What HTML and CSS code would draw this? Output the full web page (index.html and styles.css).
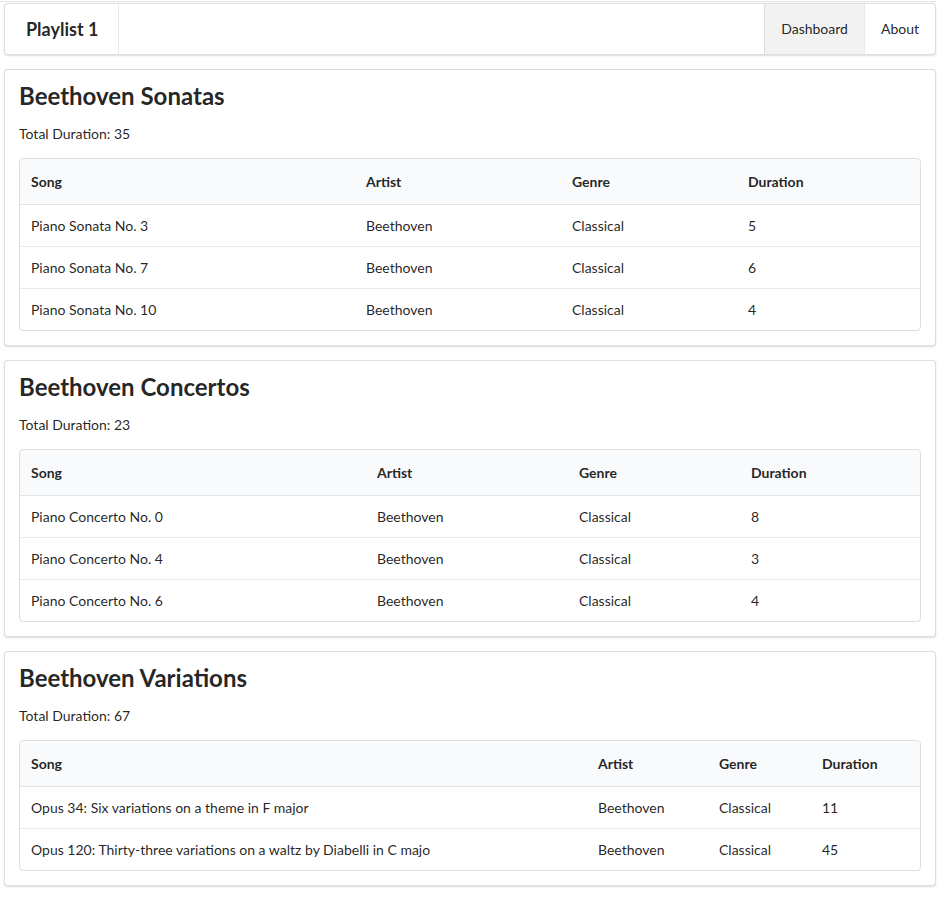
FILE: index.html
```html
<!DOCTYPE html>
<html>
<head>
<meta charset="utf-8">
<link rel="stylesheet" href="styles.css">
</head>
<body>
<div class="topline"></div>
<div class="page">
  <nav class="menu">
    <div class="brand">Playlist 1</div>
    <div class="menu-right">
      <a class="item active">Dashboard</a>
      <a class="item">About</a>
    </div>
  </nav>

  <section class="segment">
    <h2 class="title">Beethoven Sonatas</h2>
    <p class="total">Total Duration: 35</p>
    <table class="songs sonatas">
      <colgroup><col class="c1"><col class="c2"><col class="c3"><col class="c4"></colgroup>
      <thead><tr><th>Song</th><th>Artist</th><th>Genre</th><th>Duration</th></tr></thead>
      <tbody>
        <tr><td>Piano Sonata No. 3</td><td>Beethoven</td><td>Classical</td><td>5</td></tr>
        <tr><td>Piano Sonata No. 7</td><td>Beethoven</td><td>Classical</td><td>6</td></tr>
        <tr><td>Piano Sonata No. 10</td><td>Beethoven</td><td>Classical</td><td>4</td></tr>
      </tbody>
    </table>
  </section>

  <section class="segment">
    <h2 class="title">Beethoven Concertos</h2>
    <p class="total">Total Duration: 23</p>
    <table class="songs concertos">
      <colgroup><col class="c1"><col class="c2"><col class="c3"><col class="c4"></colgroup>
      <thead><tr><th>Song</th><th>Artist</th><th>Genre</th><th>Duration</th></tr></thead>
      <tbody>
        <tr><td>Piano Concerto No. 0</td><td>Beethoven</td><td>Classical</td><td>8</td></tr>
        <tr><td>Piano Concerto No. 4</td><td>Beethoven</td><td>Classical</td><td>3</td></tr>
        <tr><td>Piano Concerto No. 6</td><td>Beethoven</td><td>Classical</td><td>4</td></tr>
      </tbody>
    </table>
  </section>

  <section class="segment">
    <h2 class="title">Beethoven Variations</h2>
    <p class="total">Total Duration: 67</p>
    <table class="songs variations">
      <colgroup><col class="c1"><col class="c2"><col class="c3"><col class="c4"></colgroup>
      <thead><tr><th>Song</th><th>Artist</th><th>Genre</th><th>Duration</th></tr></thead>
      <tbody>
        <tr><td>Opus 34: Six variations on a theme in F major</td><td>Beethoven</td><td>Classical</td><td>11</td></tr>
        <tr><td>Opus 120: Thirty-three variations on a waltz by Diabelli in C majo</td><td>Beethoven</td><td>Classical</td><td>45</td></tr>
      </tbody>
    </table>
  </section>
</div>
</body>
</html>
```

FILE: styles.css
```css
html, body {
  margin: 0;
  padding: 0;
  background: #fff;
}
body {
  font-family: Lato, "Helvetica Neue", Arial, sans-serif;
  font-size: 14px;
  line-height: 20px;
  color: rgba(0, 0, 0, 0.87);
  padding-top: 1px;
}
.topline {
  height: 1px;
  width: 936px;
  background: #e3e3e3;
}
.page {
  width: 932px;
  margin-left: 4px;
  padding-top: 1px;
}
.menu {
  display: flex;
  align-items: stretch;
  border: 1px solid rgba(34, 36, 38, 0.15);
  border-radius: 4px;
  box-shadow: 0 1px 2px 0 rgba(34, 36, 38, 0.15);
  background: #fff;
  height: 50px;
}
.brand {
  font-weight: 700;
  font-size: 18px;
  line-height: 24px;
  padding: 13px 20px 13px 21px;
  border-right: 1px solid rgba(34, 36, 38, 0.1);
}
.menu-right {
  margin-left: auto;
  display: flex;
}
.item {
  display: flex;
  align-items: center;
  padding: 0 16px;
  font-size: 14px;
  color: rgba(0, 0, 0, 0.87);
  border-left: 1px solid rgba(34, 36, 38, 0.1);
  cursor: pointer;
}
.item.active {
  background: rgba(0, 0, 0, 0.05);
}
.segment {
  margin: 14px 0;
  padding: 14px;
  border: 1px solid rgba(34, 36, 38, 0.15);
  border-radius: 4px;
  box-shadow: 0 1px 2px 0 rgba(34, 36, 38, 0.15);
  background: #fff;
}
.title {
  margin: -3px 0 13px;
  font-size: 24px;
  line-height: 30px;
  font-weight: 700;
}
.total {
  margin: 0 0 14px;
}
.songs {
  width: 100%;
  table-layout: fixed;
  border: 1px solid rgba(34, 36, 38, 0.15);
  border-radius: 4px;
  border-collapse: separate;
  border-spacing: 0;
  line-height: 19px;
  text-align: left;
}
.sonatas .c1 { width: 335px; }
.sonatas .c2 { width: 206px; }
.sonatas .c3 { width: 176px; }
.sonatas .c4 { width: 183px; }
.concertos .c1 { width: 346px; }
.concertos .c2 { width: 202px; }
.concertos .c3 { width: 172px; }
.concertos .c4 { width: 180px; }
.variations .c1 { width: 567px; }
.variations .c2 { width: 121px; }
.variations .c3 { width: 103px; }
.variations .c4 { width: 109px; }
.songs th {
  background: #f9fafb;
  font-weight: 700;
  padding: 13px 11px;
  border-bottom: 1px solid rgba(34, 36, 38, 0.1);
}
.songs th:first-child { border-top-left-radius: 4px; }
.songs th:last-child { border-top-right-radius: 4px; }
.songs td {
  padding: 11px 11px;
  border-top: 1px solid rgba(34, 36, 38, 0.1);
  white-space: nowrap;
}
.songs tbody tr:first-child td {
  border-top: none;
}
```
